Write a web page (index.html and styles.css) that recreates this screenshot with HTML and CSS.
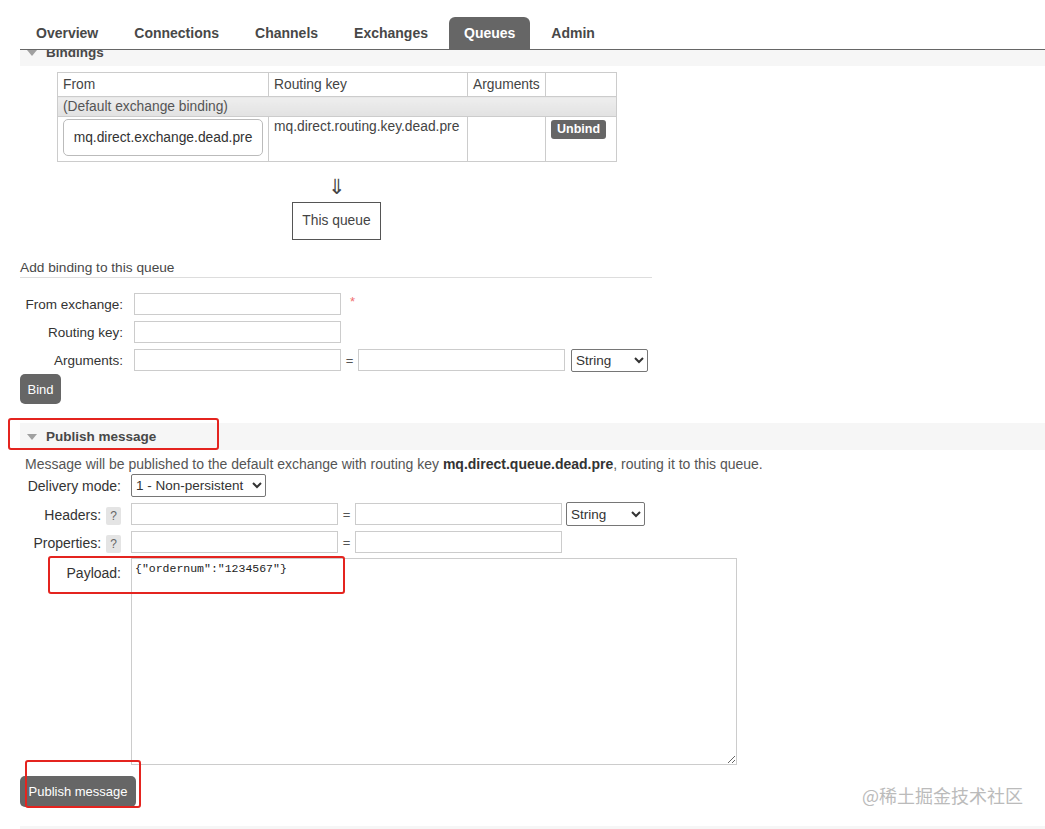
FILE: index.html
```html
<!DOCTYPE html>
<html lang="en">
<head>
<meta charset="utf-8">
<title>Queue mq.direct.queue.dead.pre</title>
<link rel="stylesheet" href="styles.css">
</head>
<body>
<nav class="tabs">
  <ul class="tab-list">
    <li class="tab">Overview</li>
    <li class="tab">Connections</li>
    <li class="tab">Channels</li>
    <li class="tab">Exchanges</li>
    <li class="tab tab-active">Queues</li>
    <li class="tab">Admin</li>
  </ul>
</nav>

<main class="content">
  <section class="section">
    <h2 class="section-head"><span class="caret"></span>Bindings</h2>
    <div class="bindings">
      <table class="binding-table">
        <colgroup>
          <col class="c-from"><col class="c-key"><col class="c-args"><col class="c-act">
        </colgroup>
        <thead>
          <tr class="head-row"><th>From</th><th>Routing key</th><th>Arguments</th><th></th></tr>
        </thead>
        <tbody>
          <tr class="group-row"><td colspan="4">(Default exchange binding)</td></tr>
          <tr class="bind-row">
            <td><div class="exchange-box">mq.direct.exchange.dead.pre</div></td>
            <td class="key-cell">mq.direct.routing.key.dead.pre</td>
            <td></td>
            <td class="act-cell"><button class="btn-small">Unbind</button></td>
          </tr>
        </tbody>
      </table>
      <div class="flow">
        <div class="flow-arrow">&#8659;</div>
        <div class="queue-box">This queue</div>
      </div>
    </div>

    <h3 class="sub-head">Add binding to this queue</h3>
    <form class="form bind-form">
      <div class="row">
        <label class="lbl">From exchange:</label>
        <input class="field" type="text">
        <span class="req">*</span>
      </div>
      <div class="row">
        <label class="lbl">Routing key:</label>
        <input class="field" type="text">
      </div>
      <div class="row">
        <label class="lbl">Arguments:</label>
        <input class="field" type="text">
        <span class="eq">=</span>
        <input class="field" type="text">
        <select class="type-select"><option>String</option></select>
      </div>
      <button class="btn bind-btn" type="button">Bind</button>
    </form>
  </section>

  <section class="section">
    <h2 class="section-head publish-head"><span class="caret"></span>Publish message<span class="mark mark-head"></span></h2>
    <p class="desc">Message will be published to the default exchange with routing key <b>mq.direct.queue.dead.pre</b>, routing it to this queue.</p>
    <form class="form pub-form">
      <div class="row">
        <label class="lbl">Delivery mode:</label>
        <select class="mode-select"><option>1 - Non-persistent</option></select>
      </div>
      <div class="row">
        <label class="lbl">Headers: <span class="help">?</span></label>
        <input class="field" type="text">
        <span class="eq">=</span>
        <input class="field" type="text">
        <select class="type-select"><option>String</option></select>
      </div>
      <div class="row">
        <label class="lbl">Properties: <span class="help">?</span></label>
        <input class="field" type="text">
        <span class="eq">=</span>
        <input class="field" type="text">
      </div>
      <div class="row payload-row">
        <label class="lbl payload-lbl">Payload:</label>
        <textarea class="payload">{"ordernum":"1234567"}</textarea>
        <span class="mark mark-payload"></span>
      </div>
      <div class="publish-wrap">
        <button class="btn publish-btn" type="button">Publish message</button>
        <span class="mark mark-btn"></span>
      </div>
    </form>
  </section>

  <section class="section">
    <h2 class="section-head next-head"></h2>
  </section>
</main>

<div class="watermark">@稀土掘金技术社区</div>
</body>
</html>
```

FILE: styles.css
```css
* { box-sizing: border-box; }

html, body {
  margin: 0;
  padding: 0;
  background: #fff;
}

body {
  font-family: "Liberation Sans", Arial, sans-serif;
  font-size: 14px;
  color: #484848;
  position: relative;
  height: 829px;
  overflow: hidden;
}

/* top navigation */
.tabs {
  margin-left: 20px;
  height: 50px;
  border-bottom: 1px solid #666;
  background: #fff;
  position: relative;
  z-index: 2;
}

.tab-list {
  list-style: none;
  margin: 0;
  padding: 17px 0 0 1px;
  display: flex;
  gap: 6px;
}

.tab {
  height: 32px;
  line-height: 33px;
  padding: 0 15px;
  font-weight: bold;
  font-size: 14px;
  color: #484848;
  border-radius: 6px 6px 0 0;
}

.tab-active {
  background: #666;
  color: #fff;
}

/* page body */
.content {
  padding-left: 20px;
}

.section-head {
  margin: 0;
  height: 27px;
  background: #f6f6f6;
  display: flex;
  align-items: center;
  padding-left: 7px;
  font-size: 13.5px;
  font-weight: bold;
  color: #484848;
  position: relative;
}

.section:first-child .section-head {
  margin-top: -11px;
}

.caret {
  width: 0;
  height: 0;
  border-left: 5px solid transparent;
  border-right: 5px solid transparent;
  border-top: 6px solid #a0a0a0;
  margin-right: 9px;
  margin-top: 1px;
}

/* bindings table */
.bindings {
  width: 559px;
  margin: 6px 0 0 37px;
}

.binding-table {
  width: 559px;
  table-layout: fixed;
  border-collapse: collapse;
  border: 1px solid #ccc;
  font-size: 13.8px;
  color: #444;
}

.c-from { width: 211px; }
.c-key { width: 199px; }
.c-args { width: 78px; }
.c-act { width: 71px; }

.binding-table th,
.binding-table td {
  border: 1px solid #ccc;
  padding: 0 5px;
  text-align: left;
  font-weight: normal;
}

.head-row th {
  height: 24px;
}

.group-row td {
  height: 20px;
  background: linear-gradient(#eeeeee, #e2e2e2);
  color: #555;
}

.bind-row td {
  height: 45px;
  vertical-align: top;
}

.bind-row .key-cell {
  padding-top: 2px;
  line-height: 16px;
}

.exchange-box {
  margin: 2px 0 0 0;
  height: 37px;
  line-height: 35px;
  border: 1px solid #bbb;
  border-radius: 5px;
  text-align: center;
  color: #333;
}

.act-cell {
  padding-top: 3px !important;
}

.btn-small {
  height: 19px;
  padding: 0 6px;
  border: 0;
  border-radius: 3px;
  background: #666;
  color: #fff;
  font-family: inherit;
  font-size: 12.5px;
  font-weight: bold;
  line-height: 19px;
}

.flow {
  text-align: center;
}

.flow-arrow {
  margin-top: 15px;
  height: 25px;
  line-height: 21px;
  font-family: "DejaVu Sans", sans-serif;
  font-size: 21px;
  color: #444;
}

.queue-box {
  display: inline-block;
  height: 38px;
  line-height: 36px;
  padding: 0 9px;
  border: 1px solid #555;
  color: #444;
  font-size: 13.8px;
}

/* binding form */
.sub-head {
  width: 632px;
  margin: 20px 0 0 0;
  padding-bottom: 1px;
  line-height: 16px;
  font-size: 13.7px;
  font-weight: normal;
  color: #484848;
  border-bottom: 1px solid #ddd;
}

.form {
  display: flex;
  flex-direction: column;
}

.bind-form {
  margin-top: 15px;
}

.row {
  display: flex;
  align-items: center;
  margin-bottom: 6px;
}

.bind-form .row {
  height: 22px;
}

.lbl {
  flex: none;
  text-align: right;
  color: #333;
  font-size: 14px;
}

.bind-form .lbl {
  width: 103px;
  margin-right: 11px;
  font-size: 13.5px;
}

.field {
  width: 207px;
  height: 22px;
  border: 1px solid #ccc;
  font-family: inherit;
  font-size: 13px;
  padding: 0 4px;
}

.req {
  align-self: flex-start;
  margin-left: 9px;
  margin-top: 1px;
  color: #f07070;
  font-size: 13px;
}

.eq {
  width: 17px;
  text-align: center;
  color: #555;
  font-size: 13px;
}

.type-select {
  flex: none;
  margin-left: 6px;
  width: 77px;
  height: 23px;
  font-family: inherit;
  font-size: 13.5px;
  color: #333;
  border: 1px solid #767676;
  border-radius: 2px;
  background: #fff;
}

.bind-form .row:nth-child(3) {
  margin-bottom: 3px;
}

.btn {
  align-self: flex-start;
  border: 0;
  border-radius: 5px;
  background: #666;
  color: #fff;
  font-family: inherit;
  font-size: 13px;
  cursor: pointer;
}

.bind-btn {
  width: 41px;
  height: 30px;
  padding: 0;
}

/* publish section */
.section + .section {
  margin-top: 19px;
}

.desc {
  margin: 6px 0 0 5px;
  line-height: 16px;
  color: #555;
}

.desc b {
  color: #333;
}

.pub-form {
  margin-top: 2px;
}

.pub-form .lbl {
  width: 101px;
  margin-right: 10px;
}

.pub-form .row {
  margin-bottom: 5px;
}

.mode-select {
  width: 135px;
  height: 23px;
  font-family: inherit;
  font-size: 13.5px;
  color: #333;
  border: 1px solid #767676;
  border-radius: 2px;
  background: #fff;
}

.pub-form .field {
  width: 207px;
}

.help {
  display: inline-block;
  width: 15px;
  height: 18px;
  line-height: 18px;
  margin-left: 1px;
  text-align: center;
  background: #e4e4e4;
  color: #666;
  font-size: 12px;
  border-radius: 2px;
  vertical-align: middle;
}

.pub-form .row:nth-child(2) .lbl,
.pub-form .row:nth-child(3) .lbl {
  margin-top: 4px;
}

.pub-form .type-select {
  margin-left: 4px;
  width: 79px;
  height: 24px;
}

.payload-row {
  align-items: flex-start;
  position: relative;
}

.payload-lbl {
  padding-top: 7px;
}

.payload {
  width: 606px;
  height: 207px;
  border: 1px solid #ccc;
  padding: 3px 3px;
  font-family: "Liberation Mono", "Noto Sans CJK SC", monospace;
  font-size: 11.5px;
  color: #222;
  resize: both;
}

.publish-wrap {
  position: relative;
  align-self: flex-start;
  margin-top: 6px;
}

.publish-btn {
  width: 116px;
  height: 31px;
  padding: 0;
}

.next-head {
  margin-top: 16px;
}

/* red highlight frames */
.mark {
  position: absolute;
  border: 2.5px solid #e4241f;
  border-radius: 3px;
  pointer-events: none;
}

.mark-head {
  left: -12px;
  top: -5px;
  width: 211px;
  height: 32px;
}

.mark-payload {
  left: 28px;
  top: -2px;
  width: 297px;
  height: 38px;
}

.mark-btn {
  left: 5px;
  top: -16px;
  width: 116px;
  height: 48px;
}

.watermark {
  position: absolute;
  left: 862px;
  top: 782px;
  font-family: "Noto Sans CJK SC", sans-serif;
  font-size: 18px;
  color: #bbbbbb;
}
```
